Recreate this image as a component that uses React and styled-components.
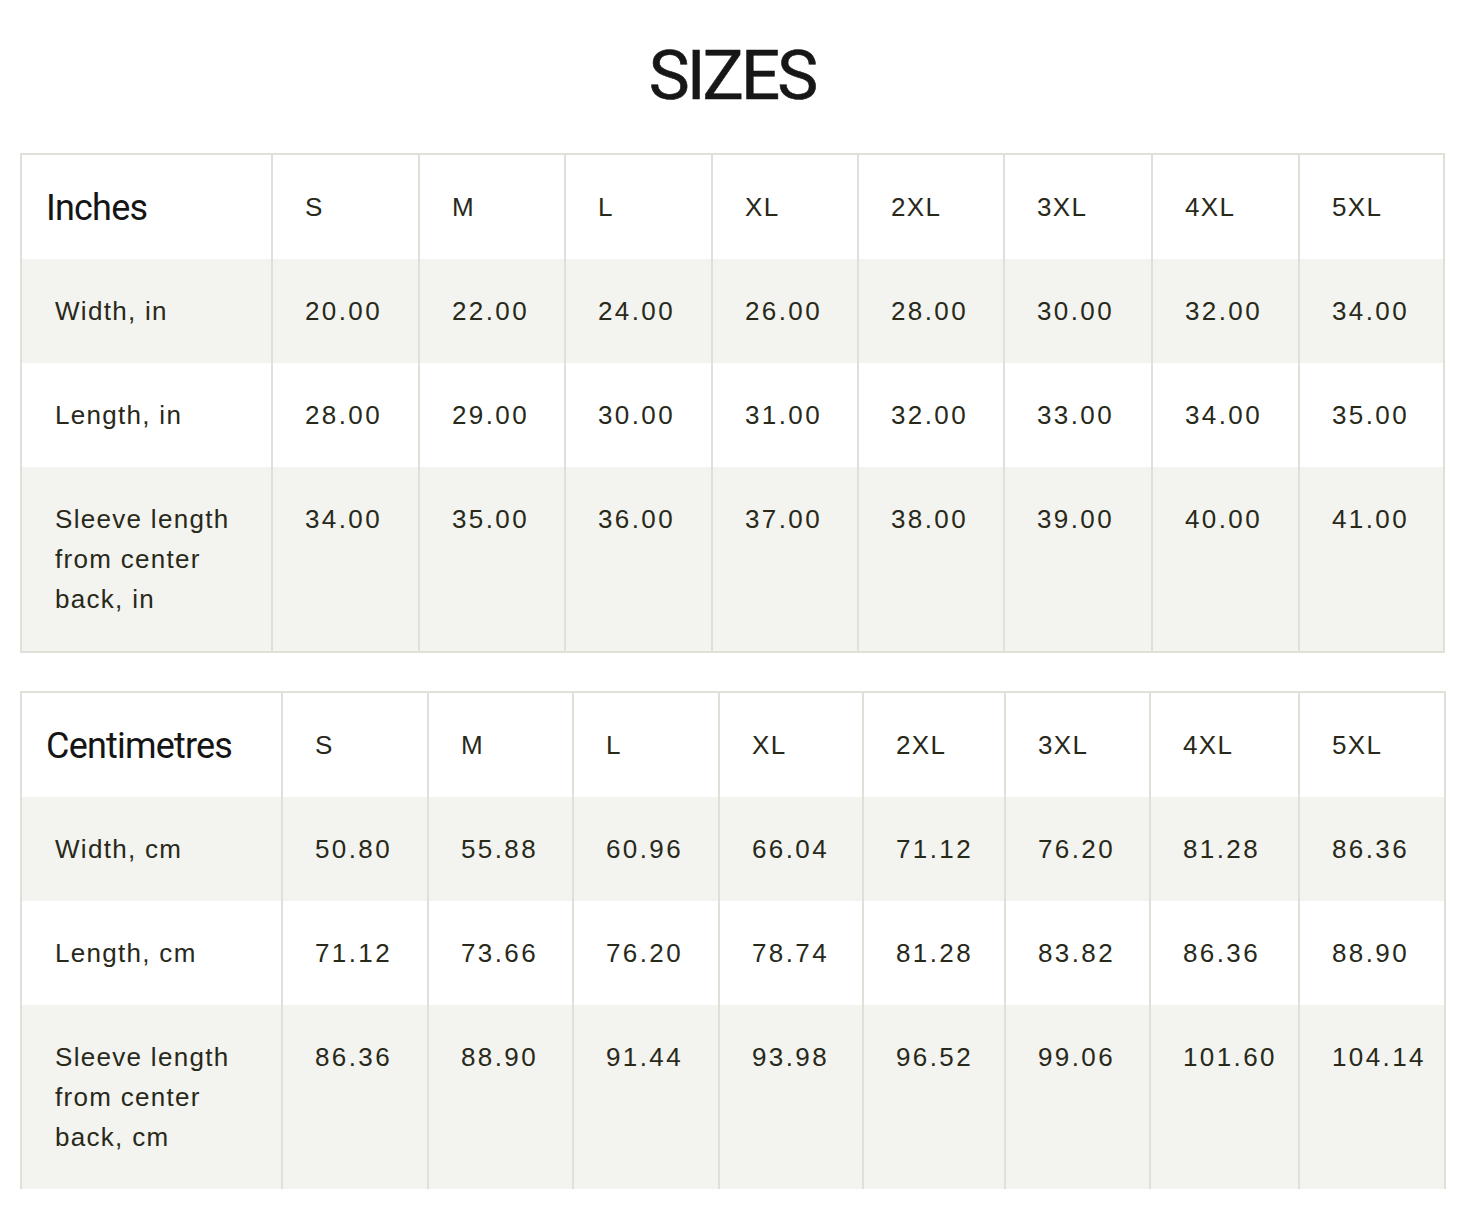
import styled, { createGlobalStyle } from 'styled-components';

const Global = createGlobalStyle`
  body {
    margin: 0;
    background: #fff;
    font-family: "Liberation Sans", Arial, sans-serif;
  }
`;

const Page = styled.div`
  padding: 0 23px 0 20px;
`;

const Title = styled.h1`
  margin: 41px 0 42px;
  height: 70px;
  line-height: 70px;
  text-align: center;
  font-family: Roboto, "Liberation Sans", sans-serif;
  font-weight: 400;
  font-size: 69px;
  letter-spacing: -3px;
  color: #171717;
  -webkit-text-stroke: 0.6px #171717;
`;

const Table = styled.table`
  width: 100%;
  table-layout: fixed;
  border-collapse: collapse;
  border: 2px solid #e0e0d8;
  border-bottom: ${(p) => (p.$open ? 'none' : '2px solid #e0e0d8')};
  margin-bottom: 38px;
`;

const Row = styled.tr`
  background: ${(p) => (p.$shade ? '#f3f3ef' : '#fff')};
`;

const Cell = styled.td`
  border-left: 2px solid #e0e0d8;
  padding: 32px 10px 32px ${(p) => (p.$first ? '33px' : '32px')};
  vertical-align: top;
  font-size: 26px;
  line-height: 40px;
  color: #28291a;
  letter-spacing: ${(p) => (p.$num ? '2.4px' : '1.3px')};
  &:first-child {
    border-left: none;
  }
`;

const HeadCell = styled(Cell)`
  padding-left: 24px;
  font-family: Roboto, "Liberation Sans", sans-serif;
  font-size: 36px;
  letter-spacing: -0.8px;
  color: #151515;
  line-height: 44px;
  padding-top: 31px;
  padding-bottom: 29px;
`;

const sizes = ['S', 'M', 'L', 'XL', '2XL', '3XL', '4XL', '5XL'];

const tables = [
  {
    unit: 'Inches',
    cols: [251, 147, 146, 147, 146, 146, 148, 147, 145],
    rows: [
      ['Width, in', ['20.00', '22.00', '24.00', '26.00', '28.00', '30.00', '32.00', '34.00']],
      ['Length, in', ['28.00', '29.00', '30.00', '31.00', '32.00', '33.00', '34.00', '35.00']],
      [
        <>Sleeve length<br />from center<br />back, in</>,
        ['34.00', '35.00', '36.00', '37.00', '38.00', '39.00', '40.00', '41.00'],
      ],
    ],
  },
  {
    unit: 'Centimetres',
    open: true,
    cols: [261, 146, 145, 146, 144, 142, 145, 149, 146],
    rows: [
      ['Width, cm', ['50.80', '55.88', '60.96', '66.04', '71.12', '76.20', '81.28', '86.36']],
      ['Length, cm', ['71.12', '73.66', '76.20', '78.74', '81.28', '83.82', '86.36', '88.90']],
      [
        <>Sleeve length<br />from center<br />back, cm</>,
        ['86.36', '88.90', '91.44', '93.98', '96.52', '99.06', '101.60', '104.14'],
      ],
    ],
  },
];

function SizeTable({ data }) {
  return (
    <Table $open={data.open}>
      <colgroup>
        {data.cols.map((w, i) => (
          <col key={i} style={{ width: w }} />
        ))}
      </colgroup>
      <tbody>
        <Row>
          <HeadCell>{data.unit}</HeadCell>
          {sizes.map((s) => (
            <Cell key={s}>{s}</Cell>
          ))}
        </Row>
        {data.rows.map(([label, values], i) => (
          <Row key={i} $shade={i % 2 === 0}>
            <Cell $first>{label}</Cell>
            {values.map((v, j) => (
              <Cell key={j} $num>{v}</Cell>
            ))}
          </Row>
        ))}
      </tbody>
    </Table>
  );
}

export default function App() {
  return (
    <Page>
      <Global />
      <Title>SIZES</Title>
      {tables.map((t) => (
        <SizeTable key={t.unit} data={t} />
      ))}
    </Page>
  );
}
